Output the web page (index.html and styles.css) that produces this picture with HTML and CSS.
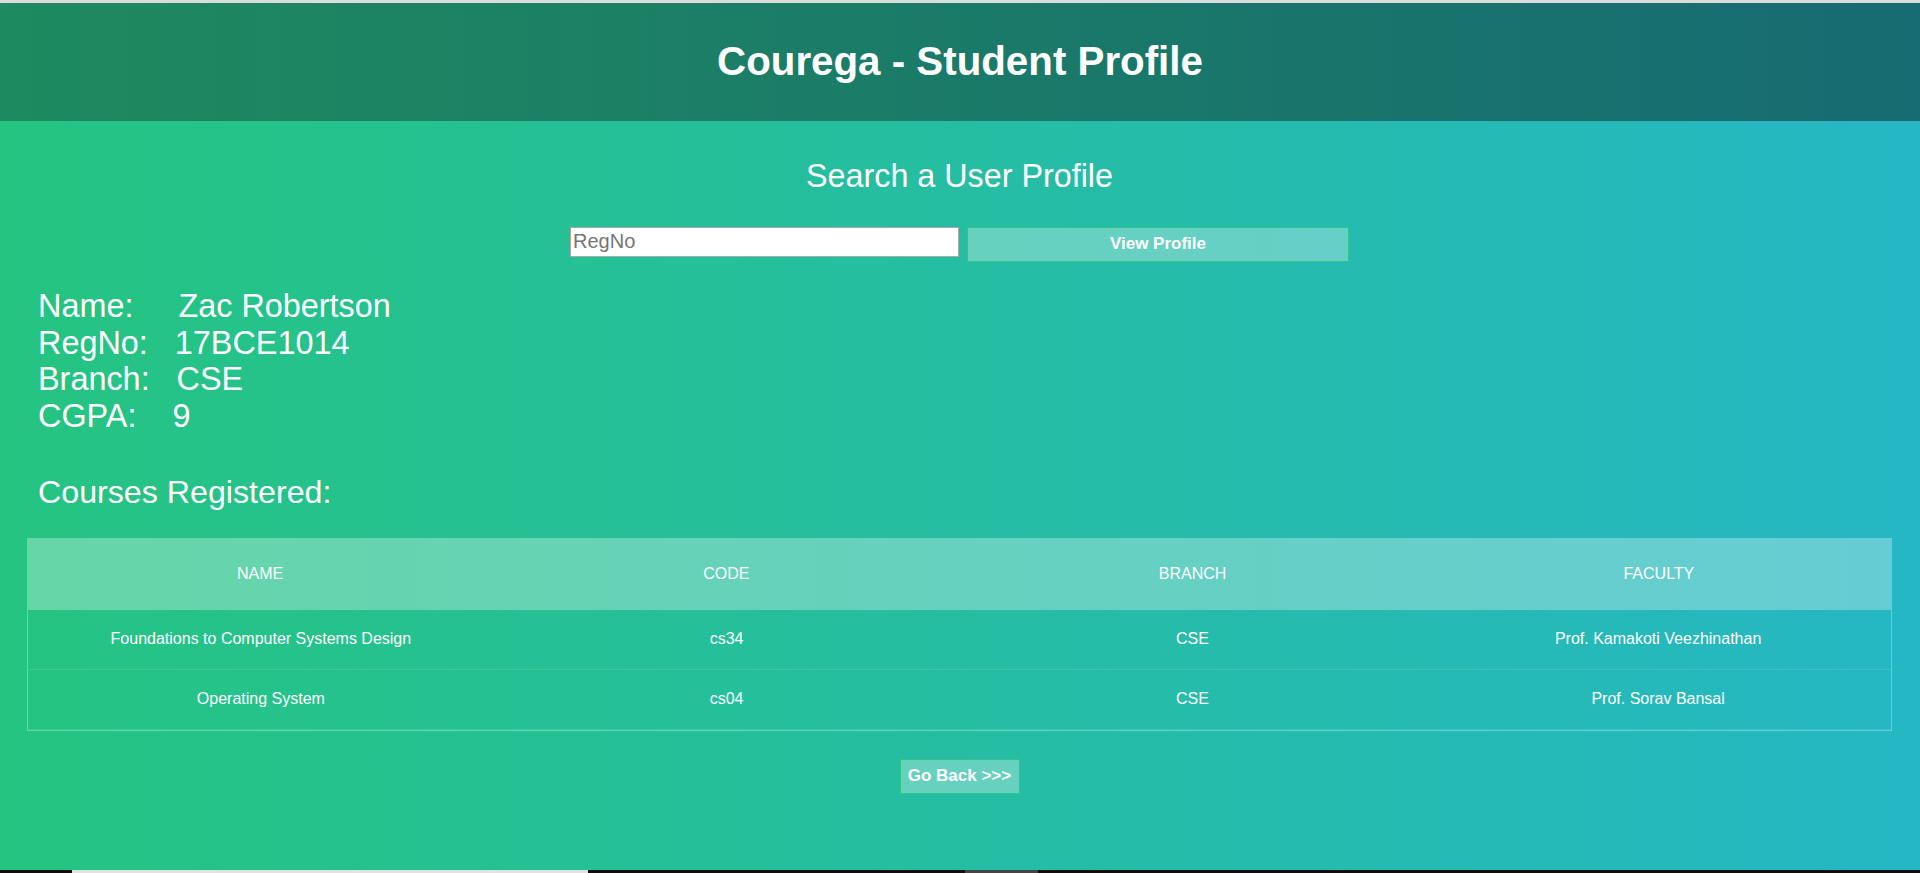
FILE: index.html
```html
<!DOCTYPE html>
<html lang="en">
<head>
<meta charset="utf-8">
<title>Courega - Student Profile</title>
<link rel="stylesheet" href="styles.css">
</head>
<body>
<div class="page">
  <header class="topbar">
    <h1 class="topbar-title">Courega - Student Profile</h1>
  </header>

  <main class="content">
    <h2 class="search-title">Search a User Profile</h2>
    <form class="search-form">
      <input class="search-input" type="text" placeholder="RegNo">
      <button class="btn btn-view" type="button">View Profile</button>
    </form>

    <div class="profile">
      <p class="profile-line">Name:     Zac Robertson</p>
      <p class="profile-line">RegNo:   17BCE1014</p>
      <p class="profile-line">Branch:   CSE</p>
      <p class="profile-line">CGPA:    9</p>
    </div>

    <h2 class="courses-title">Courses Registered:</h2>

    <section class="courses">
      <div class="tbl-header">
        <table class="tbl">
          <thead>
            <tr><th>Name</th><th>Code</th><th>Branch</th><th>Faculty</th></tr>
          </thead>
        </table>
      </div>
      <div class="tbl-content">
        <table class="tbl">
          <tbody>
            <tr><td>Foundations to Computer Systems Design</td><td>cs34</td><td>CSE</td><td>Prof. Kamakoti Veezhinathan</td></tr>
            <tr><td>Operating System</td><td>cs04</td><td>CSE</td><td>Prof. Sorav Bansal</td></tr>
          </tbody>
        </table>
      </div>
    </section>

    <div class="back">
      <button class="btn btn-back" type="button">Go Back &gt;&gt;&gt;</button>
    </div>
  </main>

  <div class="taskbar">
    <span class="tb-gap tb-gap-a"></span>
    <span class="tb-seg tb-light"></span>
    <span class="tb-gap tb-gap-b"></span>
    <span class="tb-seg tb-dark"></span>
  </div>
</div>
</body>
</html>
```

FILE: styles.css
```css
* { box-sizing: border-box; }

html, body {
  margin: 0;
  padding: 0;
}

body {
  font-family: "Liberation Sans", Arial, sans-serif;
  color: #fff;
  background: linear-gradient(to right, #25c481, #25b7c4);
}

.page {
  min-height: 100vh;
  display: flex;
  flex-direction: column;
}

.topbar {
  border-top: 3px solid #dcdcdc;
  height: 121px;
  background: linear-gradient(to right, #1e8a5f, #176b72);
  display: flex;
  align-items: center;
  justify-content: center;
}

.topbar-title {
  margin: 0;
  font-size: 40.3px;
  font-weight: bold;
  line-height: 1.15;
  color: #fff;
}

.content {
  padding: 0 28px 0 27px;
  display: flex;
  flex-direction: column;
}

.search-title {
  margin: 37px 0 0;
  font-size: 32.3px;
  font-weight: normal;
  line-height: 36.8px;
  text-align: center;
}

.search-form {
  margin: 32px 0 0;
  display: flex;
  justify-content: center;
  align-items: flex-start;
  gap: 8px;
}

.search-input {
  width: 389px;
  height: 30px;
  margin: 0;
  padding: 0 2px;
  border: 1px solid #a9a9a9;
  background: #fff;
  font-family: "Liberation Sans", Arial, sans-serif;
  font-size: 20px;
  color: #333;
}

.search-input::placeholder {
  color: #757575;
}

.btn {
  margin: 0;
  height: 35px;
  background: rgba(255, 255, 255, 0.3);
  border: 1px solid #2fc68c;
  color: #fff;
  font-family: "Liberation Sans", Arial, sans-serif;
  font-size: 17px;
  font-weight: bold;
  cursor: pointer;
}

.btn-view {
  width: 382px;
}

.btn-back {
  width: 120px;
  padding: 0 6px;
}

.profile {
  margin-top: 26px;
  padding-left: 11px;
}

.profile-line {
  margin: 0;
  font-size: 32.4px;
  line-height: 36.8px;
  white-space: pre;
}

.courses-title {
  margin: 39px 0 0;
  padding-left: 11px;
  font-size: 32.2px;
  font-weight: normal;
  line-height: 36.8px;
}

.courses {
  margin-top: 27px;
}

.tbl {
  width: 100%;
  table-layout: fixed;
  border-collapse: collapse;
}

.tbl-header {
  background: rgba(255, 255, 255, 0.3);
}

.tbl-content {
  border: 1px solid rgba(255, 255, 255, 0.3);
  border-top: 0;
}

.tbl th {
  padding: 27px 15px;
  font-size: 16px;
  line-height: 18px;
  font-weight: normal;
  text-transform: uppercase;
  text-align: center;
  color: #fff;
}

.tbl td {
  padding: 20.5px 15px;
  font-size: 16px;
  line-height: 18px;
  text-align: center;
  vertical-align: middle;
  color: #fff;
  border-bottom: 1px solid rgba(255, 255, 255, 0.1);
}

.back {
  margin-top: 28px;
  display: flex;
  justify-content: center;
}

.taskbar {
  margin-top: auto;
  height: 3px;
  background: #0d0d0d;
  display: flex;
}

.tb-gap-a { width: 72px; }
.tb-light { width: 516px; background: #e2e2e2; }
.tb-gap-b { width: 377px; }
.tb-dark { width: 73px; background: #444; }
```
